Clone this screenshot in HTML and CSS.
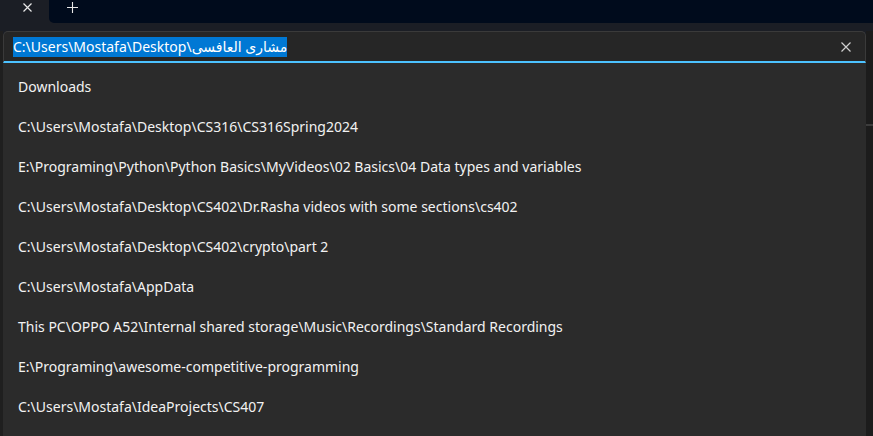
FILE: index.html
```html
<!DOCTYPE html>
<html>
<head>
<meta charset="utf-8">
<link rel="stylesheet" href="styles.css">
</head>
<body>
<div class="titlebar">
  <div class="tab">
    <svg class="tab-close" width="9" height="9" viewBox="0 0 9 9"><path d="M0.5 0.5L8.5 8.5M8.5 0.5L0.5 8.5" stroke="#e8e8e8" stroke-width="1.2"/></svg>
  </div>
  <div class="tabstrip">
    <svg class="tab-new" width="11" height="11" viewBox="0 0 11 11"><path d="M5.5 0V11M0 5.5H11" stroke="#e8e8e8" stroke-width="1.1"/></svg>
  </div>
</div>
<div class="main">
  <div class="edge-left"></div>
  <div class="center">
    <div class="address">
      <div class="address-text"><span class="sel">C:\Users\Mostafa\Desktop\مشاری العافسی</span></div>
      <svg class="clear" width="10" height="10" viewBox="0 0 10 10"><path d="M0.5 0.5L9.5 9.5M9.5 0.5L0.5 9.5" stroke="#cfcfcf" stroke-width="1.2"/></svg>
    </div>
    <ul class="list">
      <li>Downloads</li>
      <li>C:\Users\Mostafa\Desktop\CS316\CS316Spring2024</li>
      <li>E:\Programing\Python\Python Basics\MyVideos\02 Basics\04 Data types and variables</li>
      <li>C:\Users\Mostafa\Desktop\CS402\Dr.Rasha videos with some sections\cs402</li>
      <li>C:\Users\Mostafa\Desktop\CS402\crypto\part 2</li>
      <li>C:\Users\Mostafa\AppData</li>
      <li>This PC\OPPO A52\Internal shared storage\Music\Recordings\Standard Recordings</li>
      <li>E:\Programing\awesome-competitive-programming</li>
      <li>C:\Users\Mostafa\IdeaProjects\CS407</li>
    </ul>
  </div>
  <div class="edge-right"><div class="rule"></div></div>
</div>
</body>
</html>
```
FILE: styles.css
```css
* { box-sizing: border-box; }
html, body { margin: 0; padding: 0; }
body {
  width: 873px;
  height: 436px;
  overflow: hidden;
  background: #1c1c1c;
  font-family: "Noto Sans", "DejaVu Sans", sans-serif;
  font-size: 14px;
  color: #ffffff;
}
.titlebar {
  display: flex;
  height: 23px;
  background: #1b1e25;
}
.tab {
  width: 49px;
  display: flex;
  align-items: flex-start;
  justify-content: center;
  padding-left: 6px;
  padding-top: 3px;
}
.tabstrip {
  flex: 1;
  background: #000b1c;
  border-bottom-left-radius: 5px;
  padding-left: 18px;
  display: flex;
  align-items: flex-start;
  padding-top: 2px;
}
.tab-close, .tab-new { display: block; }
.main {
  display: flex;
  height: 413px;
  background: #1b1e25;
}
.edge-left {
  width: 3px;
  margin-top: 8px;
  background: #1f1f1f;
}
.center {
  flex: 1;
  display: flex;
  flex-direction: column;
  padding-top: 8px;
}
.address {
  height: 32px;
  background: #262626;
  border: 1px solid #3a3a3a;
  border-bottom: 2px solid #4cc2ff;
  border-radius: 5px 5px 0 0;
  display: flex;
  align-items: center;
  padding: 0 14px 0 9px;
}
.address-text {
  flex: 1;
  line-height: 20px;
  white-space: nowrap;
}
.sel {
  background: #0078d4;
  color: #ffffff;
  display: inline-block;
  line-height: 20px;
}
.list {
  list-style: none;
  margin: 0;
  padding: 4px 0 0 0;
  flex: 1;
  background: #2b2b2b;
}
.list li {
  height: 40px;
  line-height: 40px;
  padding-left: 15px;
  white-space: nowrap;
  color: #f2f2f2;
}
.edge-right {
  width: 7px;
  margin-top: 8px;
  background: #1c1c1c;
  padding-top: 93px;
}
.rule {
  height: 2px;
  background: #3c3c3c;
}
```
